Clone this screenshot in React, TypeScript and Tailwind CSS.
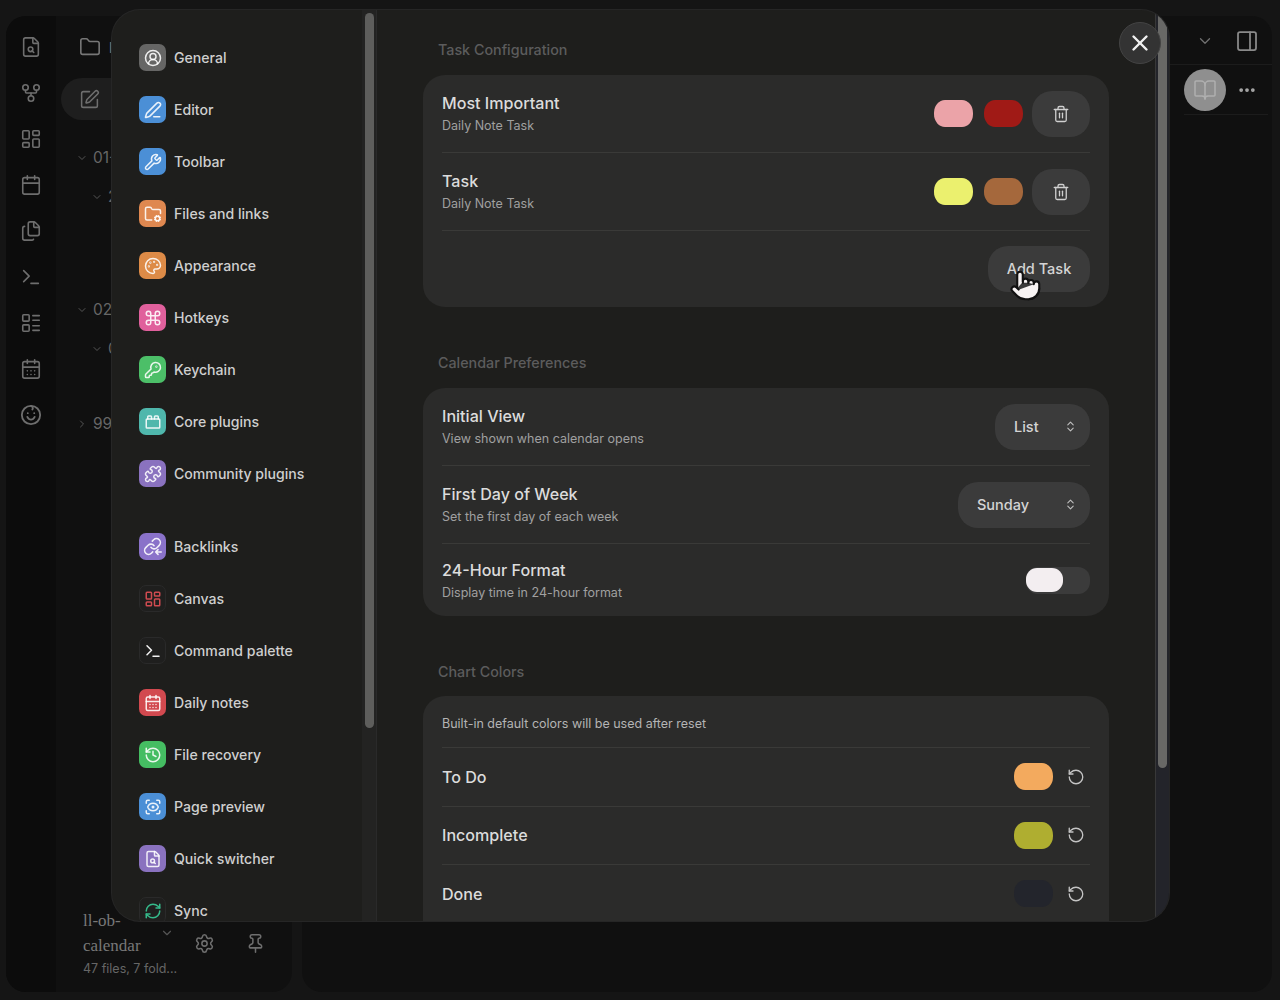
import React from "react";
import {
  FileSearch, GitFork, LayoutDashboard, Calendar, Files, Terminal, LayoutList, CalendarDays,
  Folder, SquarePen, ChevronDown, ChevronRight, ChevronsUpDown, Settings, Pin, PanelRight, BookOpen,
  MoreHorizontal, X, Trash2, RotateCcw, CircleUserRound, PenLine, Wrench, FolderCog, Palette, Command,
  KeyRound, ToyBrick, Puzzle, History, ScanEye, RefreshCw, Pointer,
} from "lucide-react";

const font = "font-['Inter','Liberation_Sans',sans-serif]";

function Baby() {
  return (
    <svg width="22" height="22" viewBox="0 0 24 24" fill="none" stroke="#6e6e6e" strokeWidth="2" strokeLinecap="round">
      <circle cx="12" cy="12" r="10" />
      <path d="M8 14c1 2 2.500 3 4 3s3-1 4-3" />
      <path d="M8.500 10h.01M15.500 10h.01" />
      <path d="M12 2c2 1 2.500 2.500 1.500 4" />
    </svg>
  );
}

function BackLink() {
  return (
    <svg width="19" height="19" viewBox="0 0 24 24" fill="none" stroke="#fff" strokeOpacity="0.88" strokeWidth="2" strokeLinecap="round" strokeLinejoin="round">
      <path d="M10 13a5 5 0 0 0 7.540.540l3-3a5 5 0 0 0-7.070-7.070l-1.720 1.710" />
      <path d="M14 11a5 5 0 0 0-7.540-.540l-3 3a5 5 0 0 0 7.070 7.070l1.710-1.710" />
      <path d="M23 19h-7M19 16l-3 3 3 3" />
    </svg>
  );
}

const ribbon = [FileSearch, GitFork, LayoutDashboard, Calendar, Files, Terminal, LayoutList, CalendarDays];

type Nav = { label: string; Icon: React.ComponentType<any> | null; bg: string; color?: string };

const nav1: Nav[] = [
  { label: "General", Icon: CircleUserRound, bg: "bg-[#666665]" },
  { label: "Editor", Icon: PenLine, bg: "bg-[#4b8fd6]" },
  { label: "Toolbar", Icon: Wrench, bg: "bg-[#4b8fd6]" },
  { label: "Files and links", Icon: FolderCog, bg: "bg-[#df8850]" },
  { label: "Appearance", Icon: Palette, bg: "bg-[#dd8b47]" },
  { label: "Hotkeys", Icon: Command, bg: "bg-[#e0609c]" },
  { label: "Keychain", Icon: KeyRound, bg: "bg-[#4cbf68]" },
  { label: "Core plugins", Icon: ToyBrick, bg: "bg-[#4fb7ac]" },
  { label: "Community plugins", Icon: Puzzle, bg: "bg-[#8a72bf]" },
];

const nav2: Nav[] = [
  { label: "Backlinks", Icon: null, bg: "bg-[#8a72c9]" },
  { label: "Canvas", Icon: LayoutDashboard, bg: "bg-[#1f1f1e] border border-[#2a2a2a]", color: "#cf4b50" },
  { label: "Command palette", Icon: Terminal, bg: "bg-[#1f1f1e] border border-[#2a2a2a]", color: "#f2f2f2" },
  { label: "Daily notes", Icon: CalendarDays, bg: "bg-[#d2494f]" },
  { label: "File recovery", Icon: History, bg: "bg-[#45bd62]" },
  { label: "Page preview", Icon: ScanEye, bg: "bg-[#4b8fd6]" },
  { label: "Quick switcher", Icon: FileSearch, bg: "bg-[#8a72bf]" },
  { label: "Sync", Icon: RefreshCw, bg: "bg-[#1f1f1e] border border-[#2a2a2a]", color: "#35b98a" },
];

function NavRow({ item }: { item: Nav }) {
  const { Icon } = item;
  return (
    <div className="flex h-[27px] shrink-0 items-center gap-2">
      <div className={`flex h-[27px] w-[27px] shrink-0 items-center justify-center rounded-[7px] ${item.bg}`}>
        {Icon ? <Icon size={18} strokeWidth={2} color={item.color ?? "rgba(255,255,255,0.88)"} /> : <BackLink />}
      </div>
      <span className="text-[14.1px] font-medium text-[#cfcfcf]">{item.label}</span>
    </div>
  );
}

function Swatch({ color }: { color: string }) {
  return <div className={`h-[27px] w-[39px] rounded-[11px/13px] ${color}`} />;
}

function TrashButton() {
  return (
    <div className="-ml-[2px] flex h-[46px] w-[58px] items-center justify-center rounded-[20px] bg-[#3b3b3b]">
      <Trash2 size={18} strokeWidth={1.75} color="#d0d0d0" />
    </div>
  );
}

function Text({ title, sub }: { title: string; sub: string }) {
  return (
    <div className="flex flex-col">
      <span className="text-[16.1px] leading-[24px] font-medium text-[#dcdcdc]">{title}</span>
      <span className="mt-[1px] text-[12.5px] leading-[20px] text-[#a0a0a0]">{sub}</span>
    </div>
  );
}

function Section({ title, children, top }: { title: string; children: React.ReactNode; top?: boolean }) {
  return (
    <div className={top ? "" : "mt-[46px]"}>
      <div className="mb-[15px] pl-[15px] text-[14.3px] leading-[20px] font-medium text-[#5c5c5c]">{title}</div>
      <div className="rounded-[22px] bg-[#2b2b2a] px-[19px]">{children}</div>
    </div>
  );
}

function SelectBox({ label, className }: { label: string; className: string }) {
  return (
    <div className={`flex h-[46px] items-center justify-between rounded-[20px] bg-[#3b3b3b] pl-[19px] pr-[13px] ${className}`}>
      <span className="text-[14.5px] font-medium text-[#d4d4d4]">{label}</span>
      <ChevronsUpDown size={13} strokeWidth={2} color="#c0c0c0" />
    </div>
  );
}

function ColorRow({ label, color, last }: { label: string; color: string; last?: boolean }) {
  return (
    <div className={`flex h-[58.6px] items-center justify-between ${last ? "" : "border-b border-[#3a3a38]"}`}>
      <span className="text-[16.1px] font-medium text-[#dcdcdc]">{label}</span>
      <div className="flex items-center gap-[14px] pr-[5px]">
        <Swatch color={color} />
        <RotateCcw size={18} strokeWidth={1.75} color="#c4c4c4" />
      </div>
    </div>
  );
}

function Tree({ label, open, pl, className }: { label: string; open?: boolean; pl: string; className: string }) {
  return (
    <div className={`flex items-center gap-[5px] ${pl} ${className}`}>
      {open ? <ChevronDown size={12} color="#555" /> : <ChevronRight size={12} color="#555" />}
      <span className="text-[15.500px] leading-[20px] text-[#666]">{label}</span>
    </div>
  );
}

export default function App() {
  return (
    <div className={`relative h-[1000px] w-[1280px] overflow-hidden bg-[#151515] ${font}`}>
      {/* background workspace */}
      <div className="flex h-full gap-[10px] pb-[8px] pl-[6px] pr-[8px] pt-[16px]">
        <div className="flex w-[286px] overflow-hidden rounded-[20px] bg-[#101010]">
          <div className="flex w-[50px] flex-col items-center gap-[24px] bg-[#0c0c0c] pt-[20px]">
            {ribbon.map((I, i) => (
              <I key={i} size={22} strokeWidth={1.75} color="#6e6e6e" />
            ))}
            <Baby />
          </div>
          <div className="flex flex-1 flex-col">
            <div className="flex items-center gap-2 pl-[23px] pt-[20px]">
              <Folder size={22} strokeWidth={1.75} color="#777" />
              <span className="text-[14px] text-[#777]">l</span>
            </div>
            <div className="ml-[5px] mt-[20px] flex h-[42px] w-[150px] items-center rounded-full bg-[#1e1e1e] pl-[18px]">
              <SquarePen size={21} strokeWidth={1.75} color="#6e6e6e" />
            </div>
            <Tree label="01-" open pl="pl-[20px]" className="mt-[28px]" />
            <Tree label="2" open pl="pl-[35px]" className="mt-[19px]" />
            <Tree label="02" open pl="pl-[20px]" className="mt-[93px]" />
            <Tree label="0" open pl="pl-[35px]" className="mt-[19px]" />
            <Tree label="99" pl="pl-[20px]" className="mt-[55px]" />
            <div className="mt-auto flex items-start pb-[15px] pl-[27px]">
              <div className="w-[77px]">
                <div className="w-[70px] font-['Liberation_Serif',serif] text-[17px] leading-[25px] text-[#787878]">ll-ob-calendar</div>
                <div className="mt-[3px] w-[100px] text-[12.5px] leading-[16px] text-[#666]">47 files, 7 fold...</div>
              </div>
              <ChevronDown className="mt-[18px] shrink-0" size={14} color="#555" />
              <Settings className="ml-[20px] mt-[25px] shrink-0" size={21} strokeWidth={1.75} color="#6e6e6e" />
              <Pin className="ml-[30px] mt-[25px] shrink-0" size={21} strokeWidth={1.75} color="#6e6e6e" />
            </div>
          </div>
        </div>
        <div className="flex flex-1 flex-col rounded-[20px] bg-[#101010]">
          <div className="flex h-[49px] items-center justify-end gap-[21px] border-b border-[#1c1c1c] pr-[13px] pt-[1px]">
            <ChevronDown size={18} strokeWidth={1.75} color="#707070" />
            <PanelRight size={24} strokeWidth={1.75} color="#8a8a8a" />
          </div>
          <div className="mr-[4px] flex h-[50px] w-[84px] items-center gap-[11px] self-end border-b border-[#1c1c1c]">
            <div className="flex h-[42px] w-[42px] shrink-0 items-center justify-center rounded-full bg-[#8f8f8f]">
              <BookOpen size={24} strokeWidth={1.5} color="#b0b0b0" />
            </div>
            <MoreHorizontal size={20} strokeWidth={2.5} color="#aaa" className="shrink-0" />
          </div>
        </div>
      </div>

      {/* settings modal */}
      <div className="absolute left-[112px] top-[10px] flex h-[911px] w-[1057px] overflow-hidden rounded-[28px] bg-[#1e1e1c] shadow-[0_0_0_1px_#262626]">
        <div className="relative w-[265px] shrink-0 overflow-hidden border-r border-[#2a2a2a]">
          <div className="flex flex-col gap-[25px] pl-[27px] pt-[34px]">
            {nav1.map((n) => (
              <NavRow key={n.label} item={n} />
            ))}
            <div className="mt-[21px] flex flex-col gap-[25px]">
              {nav2.map((n) => (
                <NavRow key={n.label} item={n} />
              ))}
            </div>
          </div>
          <div className="absolute bottom-0 right-0 top-0 w-[14px] bg-[#232322]" />
          <div className="absolute right-[2px] top-[3px] h-[715px] w-[9px] rounded-full bg-[#5e5e5c]" />
        </div>
        <div className="flex-1 overflow-hidden px-[46px] pt-[30px]">
          <Section title="Task Configuration" top>
            {[
              { t: "Most Important", a: "bg-[#eba3a8]", b: "bg-[#a01a16]" },
              { t: "Task", a: "bg-[#ebf06e]", b: "bg-[#a5683c]" },
            ].map((r) => (
              <div key={r.t} className="flex h-[78px] items-center justify-between border-b border-[#3a3a38]">
                <Text title={r.t} sub="Daily Note Task" />
                <div className="flex items-center gap-[11px]">
                  <Swatch color={r.a} />
                  <Swatch color={r.b} />
                  <TrashButton />
                </div>
              </div>
            ))}
            <div className="flex justify-end py-[15px]">
              <div className="flex h-[46px] w-[102px] items-center justify-center rounded-[20px] bg-[#3b3b3b] text-[14.5px] font-medium text-[#d4d4d4]">
                Add Task
              </div>
            </div>
          </Section>
          <Section title="Calendar Preferences">
            <div className="flex h-[78px] items-center justify-between border-b border-[#3a3a38]">
              <Text title="Initial View" sub="View shown when calendar opens" />
              <SelectBox label="List" className="w-[95px]" />
            </div>
            <div className="flex h-[78px] items-center justify-between border-b border-[#3a3a38]">
              <Text title="First Day of Week" sub="Set the first day of each week" />
              <SelectBox label="Sunday" className="w-[132px]" />
            </div>
            <div className="flex h-[72px] items-center justify-between">
              <Text title="24-Hour Format" sub="Display time in 24-hour format" />
              <div className="flex h-[27px] w-[64px] items-center rounded-[12px] bg-[#3b3b3b]">
                <div className="h-[24px] w-[37px] rounded-[11px] bg-[#f3eef0]" />
              </div>
            </div>
          </Section>
          <Section title="Chart Colors">
            <div className="-mt-[1px] flex h-[52px] items-center border-b border-[#3a3a38] pt-[5px] text-[12.5px] text-[#b4b4b4]">
              Built-in default colors will be used after reset
            </div>
            <ColorRow label="To Do" color="bg-[#f3aa5e]" />
            <ColorRow label="Incomplete" color="bg-[#afae30]" />
            <ColorRow label="Done" color="bg-[#23252c]" />
            <div className="h-[40px]" />
          </Section>
        </div>
        <div className="relative w-[14px] shrink-0 border-l border-[#383838] bg-[#23242a]">
          <div className="absolute right-[2px] top-0 h-[758px] w-[9px] rounded-full bg-[#686866]" />
        </div>
      </div>

      {/* close button */}
      <div className="absolute left-[1119px] top-[22px] flex h-[42px] w-[42px] items-center justify-center rounded-full border border-[#444] bg-[#333333]">
        <X size={26} strokeWidth={2.25} color="#f0f0f0" />
      </div>

      {/* mouse cursor */}
      <div className="absolute left-[1009px] top-[269px]">
        <Pointer size={33} strokeWidth={1.5} color="#111" fill="#f7f3f3" />
      </div>
    </div>
  );
}
